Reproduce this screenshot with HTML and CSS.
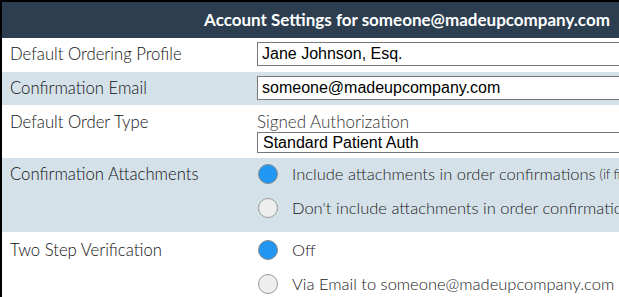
FILE: index.html
```html
<!DOCTYPE html>
<html>
	<head>
		<meta charset="utf-8">
		<title>Account Settings</title>
		<link rel="stylesheet" href="styles.css">
	</head>
	<body>
		<div class="zhsz">
			<div class="bt">Account Settings for someone@madeupcompany.com</div>
			<div class="hang h1">
				<div class="mc">Default Ordering Profile</div>
				<div class="zhi"><input class="srk" type="text" value="Jane Johnson, Esq."></div>
			</div>
			<div class="hang h2 lan">
				<div class="mc">Confirmation Email</div>
				<div class="zhi"><input class="srk" type="text" value="someone@madeupcompany.com"></div>
			</div>
			<div class="hang h3">
				<div class="mc">Default Order Type</div>
				<div class="zhi">
					<p class="xbt">Signed Authorization</p>
					<div class="xzk">Standard Patient Auth</div>
				</div>
			</div>
			<div class="hang h4 lan">
				<div class="mc">Confirmation Attachments</div>
				<div class="zhi xx">
					<div class="dx"><span class="yq xz"></span>Include attachments in order confirmations <small>(if files are available)</small></div>
					<div class="dx"><span class="yq"></span>Don't include attachments in order confirmations</div>
				</div>
			</div>
			<div class="hang h5">
				<div class="mc">Two Step Verification</div>
				<div class="zhi xx">
					<div class="dx"><span class="yq xz"></span>Off</div>
					<div class="dx"><span class="yq"></span>Via Email to someone@madeupcompany.com</div>
				</div>
			</div>
		</div>
	</body>
</html>
```

FILE: styles.css
```css
* {
	margin: 0;
	padding: 0;
	box-sizing: border-box;
}

html,body{
	height: 100%;
	overflow: hidden;
	background-color: #fff;
}

.zhsz{
	width: 812px;
	border-left: 2px #000 solid;
	border-top: 2px #000 solid;
	min-height: 100%;
	font-family: Lato, "Liberation Sans", sans-serif;
	font-size: 16.7px;
	font-weight: 300;
	color: #111;
}

.bt {
	height: 36px;
	line-height: 36px;
	background-color: #2c3e50;
	color: #fff;
	font-weight: 700;
	font-size: 17px;
	text-align: center;
}

.hang {
	display: grid;
	grid-template-columns: 250px 1fr;
	background-color: #fff;
}

.lan {
	background-color: #d5e1e9;
}

.mc {
	padding-left: 8px;
	line-height: 20px;
}

.zhi {
	padding-left: 5px;
}

.h1 {
	padding: 4px 0 6px;
}

.h2 {
	padding: 4px 0 5px;
}

.h1 .mc, .h2 .mc {
	line-height: 24px;
}

.h3 {
	padding: 7px 0 5px;
}

.h4 {
	padding: 6px 0 14px;
}

.h5 {
	padding: 8px 0 10px;
}

.srk {
	display: block;
	width: 100%;
	height: 24px;
	border: 1px #767676 solid;
	padding: 0 4px;
	font-family: "Liberation Sans", Arial, sans-serif;
	font-size: 16px;
	color: #000;
	background-color: #fff;
	outline: none;
}

.xbt {
	line-height: 20px;
	font-size: 17px;
	color: #333;
}

.xzk {
	height: 21px;
	line-height: 19px;
	border: 1px #767676 solid;
	padding: 0 5px;
	font-family: "Liberation Sans", Arial, sans-serif;
	font-size: 16px;
	color: #000;
	background-color: #fff;
}

.xx {
	display: flex;
	flex-direction: column;
	gap: 14px;
	padding-left: 6px;
}

.dx {
	display: flex;
	align-items: center;
	line-height: 20px;
	white-space: nowrap;
	font-size: 16.5px;
	color: #222;
}

.dx small {
	font-size: 13px;
	margin-left: 4px;
}

.yq {
	width: 20px;
	height: 20px;
	border-radius: 50%;
	border: 1px #999 solid;
	background-color: #eee;
	margin-right: 14px;
	flex-shrink: 0;
}

.yq.xz {
	background-color: #2196f3;
	border-color: #8a8a8a;
}
```
